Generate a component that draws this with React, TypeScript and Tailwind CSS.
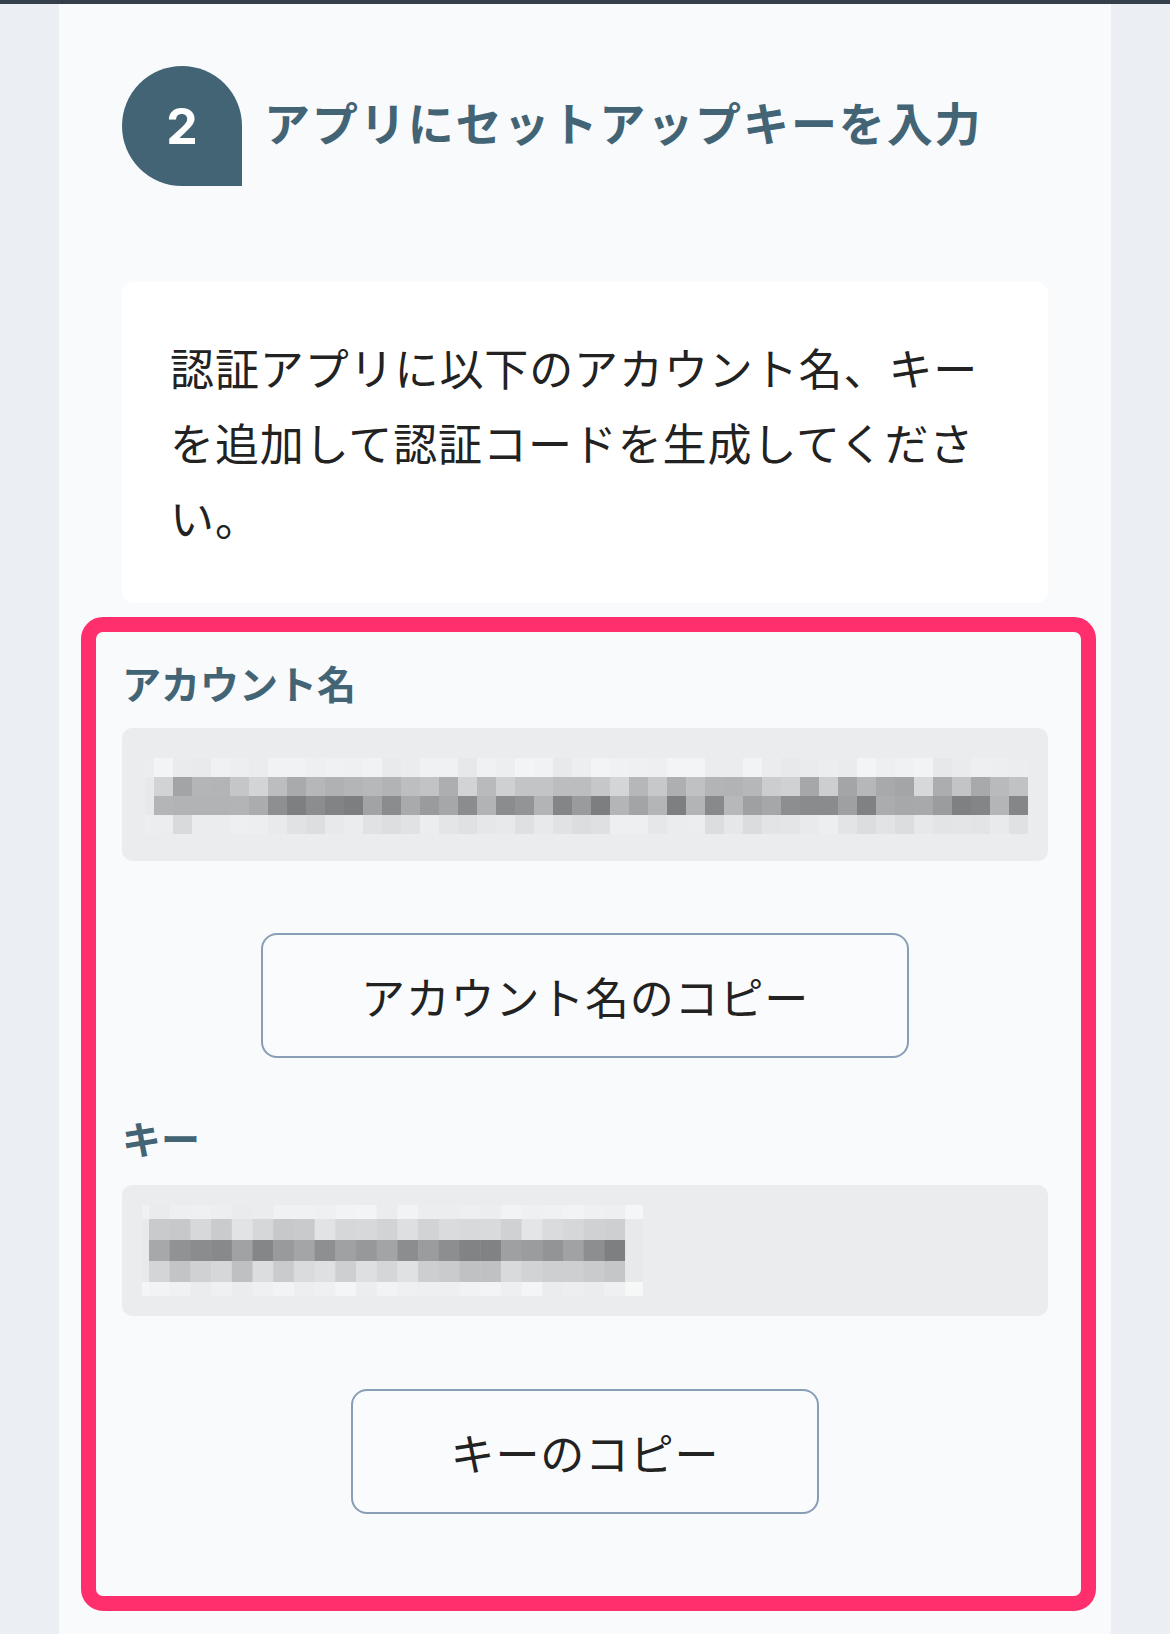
import React from 'react'

type Row = { h: number; min: number; max: number }

// small seeded generator so the censored blocks look the same every render
function rng(seed: number) {
	let s = seed
	return () => {
		s = (s * 16807) % 2147483647
		return (s - 1) / 2147483646
	}
}

function Mosaic({ cols, rows, seed, lastLight }: { cols: number[]; rows: Row[]; seed: number; lastLight?: boolean }) {
	const rand = rng(seed)
	const width = cols.reduce((a, b) => a + b, 0)
	const height = rows.reduce((a, r) => a + r.h, 0)
	const rects: React.ReactNode[] = []
	let y = 0
	rows.forEach((row, ri) => {
		let x = 0
		cols.forEach((w, ci) => {
			let v = Math.round(row.min + rand() * (row.max - row.min))
			if (ci === 0 || (lastLight && ci === cols.length - 1)) v = Math.max(v, 226) + 6
			if (v > 250) v = 244
			rects.push(
				<rect key={ri + '-' + ci} x={x} y={y} width={w + 0.5} height={row.h + 0.5} fill={`rgb(${v},${v + 1},${Math.min(v + 3, 247)})`} />,
			)
			x += w
		})
		y += row.h
	})
	return (
		<svg width={width} height={height} viewBox={`0 0 ${width} ${height}`} className="block">
			{rects}
		</svg>
	)
}

function Field({ children, pad }: { children: React.ReactNode; pad: string }) {
	return <div className={`rounded-[10px] bg-[#ebecee] ${pad}`}>{children}</div>
}

function CopyButton({ label, mt }: { label: string; mt: string }) {
	return (
		<div className={`flex justify-center ${mt}`}>
			<button className="h-[125px] rounded-[16px] border-2 border-[#889eb7] bg-[#fafbfc] px-[98px] text-[44px] leading-none tracking-[0.8px] text-[#222]">
				{label}
			</button>
		</div>
	)
}

const accountCols = [9, ...Array(46).fill(19)]
const keyCols = [7, ...Array(23).fill(20.7), 18]

export default function App() {
	return (
		<div className="min-h-[1634px] bg-[#ebeef2] font-['Noto_Sans_CJK_JP','Noto_Sans',sans-serif]">
			<div className="h-[4px] bg-[#343f4b]" />
			<div className="ml-[59px] min-h-[1630px] w-[1052px] bg-[#f8fafc] px-[63px] pt-[62px]">
				<div className="flex items-center gap-[22px]">
					<div className="flex h-[120px] w-[120px] items-center justify-center rounded-tl-full rounded-tr-full rounded-bl-full rounded-br-[4px] bg-[#436475]">
						<span className="font-['Inter','Liberation_Sans',sans-serif] text-[50px] font-bold leading-none text-white">2</span>
					</div>
					<h2 className="pb-[10px] whitespace-nowrap text-[46px] font-bold tracking-[1.9px] text-[#436475]">
						アプリにセットアップキーを入力
					</h2>
				</div>

				<div className="mt-[96px] rounded-[12px] bg-white p-[48px]">
					<p className="text-[44px] leading-[75px] tracking-[0.9px] text-[#222]">
						認証アプリに以下のアカウント名、キーを追加して認証コードを生成してください。
					</p>
				</div>

				<section className="relative pt-[52px] pb-[40px]">
					<div className="pointer-events-none absolute top-[14px] left-[-41px] right-[-48px] h-[994px] rounded-[22px] border-[15px] border-[#ff2f6d]" />

					<div className="text-[39px] font-bold leading-[54px] text-[#436475]">アカウント名</div>
					<div className="mt-[19px]">
						<Field pad="h-[133px] pt-[30px] pl-[23px]">
							<Mosaic
								cols={accountCols}
								seed={7}
								rows={[
									{ h: 19, min: 230, max: 244 },
									{ h: 19, min: 160, max: 215 },
									{ h: 19, min: 125, max: 185 },
									{ h: 19, min: 216, max: 238 },
								]}
							/>
						</Field>
					</div>
					<CopyButton label="アカウント名のコピー" mt="mt-[72px]" />

					<div className="mt-[52px] text-[39px] font-bold leading-[54px] text-[#436475]">キー</div>
					<div className="mt-[21px]">
						<Field pad="h-[131px] pt-[20px] pl-[20px]">
							<Mosaic
								cols={keyCols}
								seed={23}
								lastLight
								rows={[
									{ h: 14, min: 234, max: 244 },
									{ h: 21, min: 198, max: 228 },
									{ h: 21, min: 125, max: 168 },
									{ h: 21, min: 190, max: 224 },
									{ h: 14, min: 234, max: 244 },
								]}
							/>
						</Field>
					</div>
					<CopyButton label="キーのコピー" mt="mt-[73px]" />
				</section>
			</div>
		</div>
	)
}
